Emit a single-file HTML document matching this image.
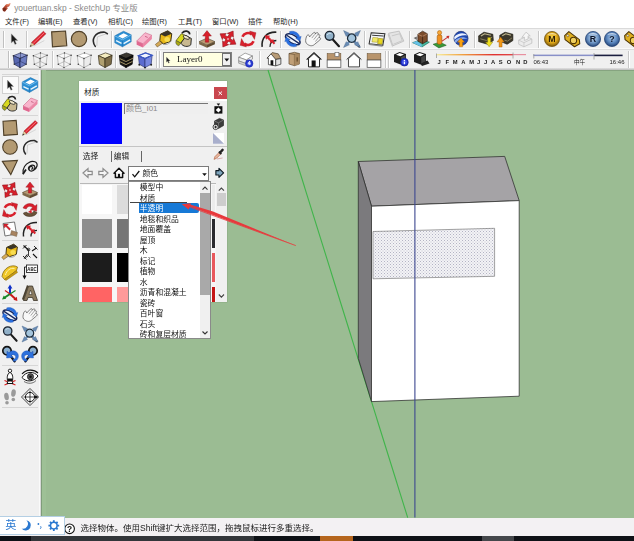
<!DOCTYPE html><html lang="zh"><head><meta charset="utf-8"><title>youertuan.skp - SketchUp</title><style>
html,body{margin:0;padding:0}
body{width:634px;height:541px;overflow:hidden;background:#f0f0f0;position:relative;
 font-family:"Liberation Sans","Noto Sans CJK SC",sans-serif;font-size:9px;color:#222}
.a{position:absolute}
.t{position:absolute;white-space:nowrap;line-height:1}
svg{position:absolute;overflow:visible}
#blurwrap{position:absolute;left:0;top:0;width:634px;height:541px;overflow:hidden;filter:blur(0.55px)}</style></head><body><div id="blurwrap">
<div class="a" style="left:0px;top:0px;width:634px;height:14px;background:#ffffff;"></div>
<div class="t" style="left:14.2px;top:3.6px;font-size:8.35px;color:#8a8a8a;">youertuan.skp - SketchUp 专业版</div>
<div class="a" style="left:0px;top:14px;width:634px;height:13.5px;background:#ffffff;"></div>
<div class="t" style="left:5px;top:17.5px;font-size:7.35px;color:#2a2a2a;">文件(F)</div>
<div class="t" style="left:38px;top:17.5px;font-size:7.35px;color:#2a2a2a;">编辑(E)</div>
<div class="t" style="left:73px;top:17.5px;font-size:7.35px;color:#2a2a2a;">查看(V)</div>
<div class="t" style="left:108px;top:17.5px;font-size:7.35px;color:#2a2a2a;">相机(C)</div>
<div class="t" style="left:142px;top:17.5px;font-size:7.35px;color:#2a2a2a;">绘图(R)</div>
<div class="t" style="left:178px;top:17.5px;font-size:7.35px;color:#2a2a2a;">工具(T)</div>
<div class="t" style="left:212px;top:17.5px;font-size:7.35px;color:#2a2a2a;">窗口(W)</div>
<div class="t" style="left:248px;top:17.5px;font-size:7.35px;color:#2a2a2a;">插件</div>
<div class="t" style="left:273px;top:17.5px;font-size:7.35px;color:#2a2a2a;">帮助(H)</div>
<div class="a" style="left:0px;top:27.5px;width:634px;height:42.5px;background:#f0f0f0;"></div>
<div class="a" style="left:0px;top:27.5px;width:634px;height:1px;background:#dadada;"></div>
<div class="a" style="left:0px;top:48px;width:634px;height:1px;background:#fafafa;"></div>
<div class="a" style="left:0px;top:49px;width:634px;height:1px;background:#dedede;"></div>
<div class="a" style="left:0px;top:68px;width:634px;height:2px;background:linear-gradient(#e2e2e2,#bcbcbc);"></div>
<div class="a" style="left:0px;top:70px;width:41px;height:447px;background:#f0f0f0;"></div>
<div class="a" style="left:41px;top:70px;width:593px;height:447.6px;background:#9bbc93;"></div>
<div class="a" style="left:41px;top:70px;width:1px;height:447.6px;background:#7f9c7a;"></div>
<div class="a" style="left:41px;top:70px;width:593px;height:1px;background:#86a480;"></div>
<div class="a" style="left:42px;top:70px;width:4px;height:447.6px;background:#9ec096;"></div>
<div class="a" style="left:0px;top:517.6px;width:634px;height:18.4px;background:#f3f1f3;"></div>
<div class="t" style="left:80.6px;top:524px;font-size:8.5px;color:#222;">选择物体。使用Shift键扩大选择范围，拖拽鼠标进行多重选择。</div>
<div class="a" style="left:0px;top:535.6px;width:634px;height:6px;background:#0e1116;"></div>
<div class="a" style="left:31px;top:535.6px;width:223px;height:6px;background:#33363a;"></div>
<div class="a" style="left:320px;top:535.6px;width:33px;height:6px;background:#b5651d;"></div>
<div class="a" style="left:482px;top:535.6px;width:32px;height:6px;background:#44474b;"></div>
<svg style="left:0;top:0" width="634" height="541" viewBox="0 0 634 541"><line x1="268" y1="70" x2="407.7" y2="517.6" stroke="#3fb44a" stroke-width="1.1"/><polygon points="358.3,161.5 504.7,156.4 519.2,200.6 371.5,206.2" fill="#a5a3a6" stroke="#2c2c2c" stroke-width="0.75" stroke-linejoin="round"/><polygon points="358.3,161.5 371.5,206.2 371.5,401.6 358.3,358.4" fill="#7b7a7d" stroke="#2c2c2c" stroke-width="0.75" stroke-linejoin="round"/><polygon points="371.5,206.2 519.2,200.6 519.2,396.2 371.5,401.6" fill="#ffffff" stroke="#2c2c2c" stroke-width="0.75" stroke-linejoin="round"/><defs><pattern id="dots" width="3" height="3" patternUnits="userSpaceOnUse"><rect width="3" height="3" fill="#f3f3f6"/><rect x="0" y="0" width="1" height="1" fill="#b4b4c4"/><rect x="1.5" y="1.5" width="1" height="1" fill="#c4c4d0"/></pattern></defs><polygon points="373,231.5 494.6,228.3 494.6,276.3 373,278.8" fill="url(#dots)" stroke="#666" stroke-width="0.6"/><line x1="414.9" y1="70" x2="414.9" y2="517.6" stroke="#3c4890" stroke-width="1.1"/></svg>
<div class="a" style="left:78.5px;top:81px;width:148.4px;height:221px;background:#f0f0f0;box-shadow:0 0 0 0.5px #8aa882;"></div>
<div class="a" style="left:78.5px;top:81px;width:148.4px;height:19.5px;background:#ffffff;"></div>
<div class="t" style="left:84px;top:88.6px;font-size:7.7px;color:#222;">材质</div>
<div class="a" style="left:214.2px;top:86.5px;width:12.6px;height:12.4px;background:#c9464e;"></div>
<svg style="left:214.2px;top:86.5px" width="12.6" height="12.4"><path d="M4.6 4.5l3.4 3.4M8 4.5l-3.4 3.4" stroke="#fff" stroke-width="1" fill="none"/></svg>
<div class="a" style="left:80.7px;top:103.3px;width:41.6px;height:41px;background:#0000ff;"></div>
<div class="a" style="left:124.4px;top:103.3px;width:84px;height:10.6px;background:#efefef;border-top:1px solid #777;border-left:1px solid #777;box-sizing:border-box;"></div>
<div class="t" style="left:126px;top:104.8px;font-size:8px;color:#8a8a8a;">颜色_I01</div>
<svg style="left:211px;top:102px" width="16" height="44" viewBox="0 0 16 44"><path d="M5.6 1.6h3.6l-1.8 2.2z" fill="#111"/><rect x="3.4" y="4.2" width="8" height="7.4" fill="#111"/><path d="M7.4 5.4l2.6 2.5-2.6 2.5-2.6-2.5z" fill="#fff"/><path d="M3.5 19l5-2.6 4 1.6v5.6l-5 2.8-4-1.8z" fill="#3c3c3c" stroke="#1a1a1a" stroke-width="0.6"/><path d="M3.5 19l4 1.8 5-2.8" fill="none" stroke="#8a8a8a" stroke-width="0.7"/><path d="M7.5 20.8v5.6" stroke="#8a8a8a" stroke-width="0.6"/><circle cx="4.6" cy="25" r="2.6" fill="#fff" stroke="#1a1a1a" stroke-width="0.8"/><path d="M3.2 25h2.8M4.6 23.6v2.8" stroke="#111" stroke-width="0.9"/><rect x="2" y="31" width="11" height="10.7" fill="#fff"/><path d="M2 31L13 41.7H2z" fill="#a9afcc"/></svg>
<div class="a" style="left:79px;top:146px;width:147.5px;height:1px;background:#c4c4c4;"></div>
<div class="t" style="left:82.8px;top:153px;font-size:7.7px;color:#222;">选择</div>
<div class="a" style="left:110.6px;top:150.5px;width:1px;height:11.5px;background:#666;"></div>
<div class="t" style="left:113.8px;top:153px;font-size:7.7px;color:#222;">编辑</div>
<div class="a" style="left:141px;top:151px;width:1px;height:11px;background:#666;"></div>
<svg style="left:211.5px;top:147.5px" width="13" height="13" viewBox="0 0 16 16"><path d="M2.5 14l1.2-3.5 5-5 2 2-5 5z" fill="#e8b8a0" stroke="#b06040" stroke-width="0.8"/><path d="M8.5 4.5l3 3" stroke="#222" stroke-width="2.2"/><path d="M10 5.5l3-3.2" stroke="#222" stroke-width="3" stroke-linecap="round"/><path d="M6 13.5l7-1.2" stroke="#c88" stroke-width="0.8"/></svg>
<svg style="left:80px;top:165px" width="48" height="16" viewBox="0 0 48 16"><path d="M3 8l5-4.5v2.8h4.2v3.4h-4.2v2.8z" fill="#f4f4f4" stroke="#8c8c8c" stroke-width="1.2"/><path d="M28 8l-5-4.5v2.8h-4.2v3.4h4.2v2.8z" fill="#f4f4f4" stroke="#8c8c8c" stroke-width="1.2"/><path d="M34 8.2l5-5 5 5h-1.4v4.2h-7.2v-4.2z" fill="#fff" stroke="#111" stroke-width="1.5" stroke-linejoin="round"/><rect x="37.9" y="8.8" width="2.2" height="3.6" fill="#111"/></svg>
<div class="a" style="left:127.8px;top:166.4px;width:81.2px;height:14.4px;background:#ffffff;border:1px solid #7a7a7a;box-sizing:border-box;"></div>
<svg style="left:131px;top:169px" width="10" height="10" viewBox="0 0 10 10"><path d="M1.5 5.2l2.2 2.6L8.3 2" fill="none" stroke="#111" stroke-width="1.3"/></svg>
<div class="t" style="left:142.4px;top:170px;font-size:7.8px;color:#222;">颜色</div>
<div class="a" style="left:199px;top:168.5px;width:9px;height:10.6px;background:#ffffff;"></div>
<svg style="left:199px;top:168.5px" width="9.6" height="10.6"><path d="M3.2 4.2h4.6l-2.3 2.8z" fill="#111"/></svg>
<svg style="left:213.6px;top:166.4px" width="12" height="14" viewBox="0 0 14 16"><path d="M2.2 5.2h3.6v-2.6l5.4 5.2-5.4 5.2v-2.6h-3.6z" fill="#7ea4bc" stroke="#0c1820" stroke-width="1.3" stroke-linejoin="round"/></svg>
<div class="a" style="left:79.5px;top:183px;width:137px;height:119px;background:#f6f6f6;border-top:1px solid #b8b8b8;box-sizing:border-box;"></div>
<div class="a" style="left:82px;top:184.7px;width:29.5px;height:29.30000000000001px;background:#ffffff;"></div>
<div class="a" style="left:116.5px;top:184.7px;width:14px;height:29.30000000000001px;background:#dcdcdc;"></div>
<div class="a" style="left:211.5px;top:184.7px;width:3.7px;height:29.30000000000001px;background:#ececec;"></div>
<div class="a" style="left:82px;top:219.3px;width:29.5px;height:28.299999999999983px;background:#8e8e8e;"></div>
<div class="a" style="left:116.5px;top:219.3px;width:14px;height:28.299999999999983px;background:#767676;"></div>
<div class="a" style="left:211.5px;top:219.3px;width:3.7px;height:28.299999999999983px;background:#2a2a2e;"></div>
<div class="a" style="left:82px;top:253px;width:29.5px;height:29.19999999999999px;background:#1c1c1c;"></div>
<div class="a" style="left:116.5px;top:253px;width:14px;height:29.19999999999999px;background:#000000;"></div>
<div class="a" style="left:211.5px;top:253px;width:3.7px;height:29.19999999999999px;background:#e8585c;"></div>
<div class="a" style="left:82px;top:286.8px;width:29.5px;height:15.199999999999989px;background:#ff6464;"></div>
<div class="a" style="left:116.5px;top:286.8px;width:14px;height:15.199999999999989px;background:#ff9a9a;"></div>
<div class="a" style="left:211.5px;top:286.8px;width:3.7px;height:15.199999999999989px;background:#c41414;"></div>
<div class="a" style="left:216.4px;top:183px;width:10.4px;height:119px;background:#f0f0f0;"></div>
<div class="a" style="left:217.2px;top:193px;width:9px;height:12.5px;background:#cdcdcd;"></div>
<svg style="left:216.4px;top:183px" width="10.6" height="119"><path d="M2.8 7.6l2.6-2.6 2.6 2.6" fill="none" stroke="#444" stroke-width="1.1"/><path d="M2.8 111.5l2.6 2.6 2.6-2.6" fill="none" stroke="#444" stroke-width="1.1"/></svg>
<div class="a" style="left:128px;top:181px;width:83px;height:158.4px;background:#ffffff;border:1px solid #8a8a8a;box-sizing:border-box;"></div>
<div class="a" style="left:130px;top:202px;width:57px;height:1px;background:#444;"></div>
<div class="a" style="left:139px;top:203.3px;width:59.5px;height:10.2px;background:#1779d6;border-radius:0 2px 2px 0;"></div>
<div class="t" style="left:139.8px;top:184.3px;font-size:7.8px;color:#111;">模型中</div>
<div class="t" style="left:139.8px;top:194.8px;font-size:7.8px;color:#111;">材质</div>
<div class="t" style="left:139.8px;top:205.3px;font-size:7.8px;color:#fff;">半透明</div>
<div class="t" style="left:139.8px;top:215.8px;font-size:7.8px;color:#111;">地毯和织品</div>
<div class="t" style="left:139.8px;top:226.3px;font-size:7.8px;color:#111;">地面覆盖</div>
<div class="t" style="left:139.8px;top:236.8px;font-size:7.8px;color:#111;">屋顶</div>
<div class="t" style="left:139.8px;top:247.3px;font-size:7.8px;color:#111;">木</div>
<div class="t" style="left:139.8px;top:257.8px;font-size:7.8px;color:#111;">标记</div>
<div class="t" style="left:139.8px;top:268.3px;font-size:7.8px;color:#111;">植物</div>
<div class="t" style="left:139.8px;top:278.8px;font-size:7.8px;color:#111;">水</div>
<div class="t" style="left:139.8px;top:289.3px;font-size:7.8px;color:#111;">沥青和混凝土</div>
<div class="t" style="left:139.8px;top:299.8px;font-size:7.8px;color:#111;">瓷砖</div>
<div class="t" style="left:139.8px;top:310.3px;font-size:7.8px;color:#111;">百叶窗</div>
<div class="t" style="left:139.8px;top:320.8px;font-size:7.8px;color:#111;">石头</div>
<div class="t" style="left:139.8px;top:331.3px;font-size:7.8px;color:#111;">砖和复层材质</div>
<div class="a" style="left:200px;top:181.5px;width:10px;height:156.5px;background:#f0f0f0;"></div>
<div class="a" style="left:200.4px;top:192.6px;width:9.2px;height:102px;background:#a9a9a9;"></div>
<svg style="left:200px;top:181.5px" width="10" height="157"><path d="M2.5 7.6l2.5-2.5 2.5 2.5" fill="none" stroke="#333" stroke-width="1.1"/><path d="M2.5 149.5l2.5 2.5 2.5-2.5" fill="none" stroke="#333" stroke-width="1.1"/></svg>
<svg style="left:0;top:0" width="634" height="541" viewBox="0 0 634 541"><path d="M295.8 245.6L190 206.5L188.6 209.6L182 204.3L190.5 203.2L190.8 204.8L213 211.5Z" fill="#e8383c"/><path d="M295.8 245.6L182.5 204.4" stroke="#e8383c" stroke-width="0.8"/></svg>
<div class="a" style="left:39px;top:70px;width:1px;height:447px;background:#fafafa;"></div>
<div class="a" style="left:40px;top:70px;width:1px;height:447px;background:#d8d8d8;"></div>
<div class="a" style="left:1.5px;top:76px;width:17px;height:18px;background:#fbfbfb;border:1px solid #d0d0d0;box-sizing:border-box;"></div>
<svg style="left:9.6px;top:85.3px" width="1" height="1"><g transform="scale(1.0)"><path d="M-2.6 -5V3.8L-0.6 2L0.9 5.2L2.3 4.6L0.9 1.5H3.6Z" fill="#1a1a1a" stroke="#aaa" stroke-width="0.4"/></g></svg>
<svg style="left:30.2px;top:85.3px" width="1" height="1"><g transform="scale(1.0)"><path d="M-7.8 -3L0.5 -7.4L7.8 -4V2.6L-0.5 7.4L-7.8 3.6Z" fill="#2b8fd4" stroke="#1668a8" stroke-width="0.5"/><path d="M-4.6 -2.6L0.6 -5.4L4.8 -3.4L-0.4 -0.4Z" fill="#fff"/><path d="M-0.5 0.8V7.4" stroke="#1668a8" stroke-width="0.5"/><path d="M-6.6 1.6L-1.4 4.2M0.6 4.4L6.8 0.8" fill="none" stroke="#eaf5fc" stroke-width="1.4"/><path d="M-7.8 -3L-0.5 0.8L7.8 -4" fill="none" stroke="#8cccf4" stroke-width="0.7"/></g></svg>
<svg style="left:9.6px;top:104.2px" width="1" height="1"><g transform="scale(1.0)"><path d="M-2 -5.5C0.5 -8.5 5 -8 5.5 -4.5" fill="none" stroke="#222" stroke-width="1.6"/><path d="M-7.5 1.5L-2.5 -5L2 -3L-3 4Z" fill="#d8d820" stroke="#55550a" stroke-width="0.7"/><path d="M-3 4L2 -3L7 -0.5L6.5 5.5C4 8 -1 7.5 -3 4Z" fill="#c8b890" stroke="#222" stroke-width="0.9"/><path d="M-7.5 1.5C-8.5 4 -7 6 -5 6.5L-3 4Z" fill="#a8a810" stroke="#444" stroke-width="0.5"/><ellipse cx="2.2" cy="-1.6" rx="3.2" ry="1.5" transform="rotate(25 2.2 -1.6)" fill="#efe6c8" stroke="#222" stroke-width="0.7"/></g></svg>
<svg style="left:30.2px;top:104.2px" width="1" height="1"><g transform="scale(1.0)"><path d="M-7 2L1 -6L7.5 -3.5L-1 4.5Z" fill="#f9b4cc" stroke="#c05878" stroke-width="0.5"/><path d="M-7 2L-1 4.5V8L-7 5.5Z" fill="#e06890"/><path d="M-1 4.5L7.5 -3.5V0L-1 8Z" fill="#ec86a6"/><path d="M1 -2.5L3.5 -1.5" stroke="#c05878" stroke-width="0.8"/></g></svg>
<svg style="left:9.6px;top:127.9px" width="1" height="1"><g transform="scale(1.0)"><path d="M-7 -6.8L6.2 -7.6L7.4 6.4L-6.2 7.4Z" fill="#b39a72" stroke="#4e3f28" stroke-width="1.1"/></g></svg>
<svg style="left:30.2px;top:127.9px" width="1" height="1"><g transform="scale(1.0)"><path d="M-7.6 7.4L-6 3L-3.4 5.6Z" fill="#e8c89a" stroke="#553" stroke-width="0.3"/><path d="M-7.6 7.4L-7 5.6L-5.9 6.7Z" fill="#222"/><path d="M-6 3L5.2 -7.4L7.6 -5L-3.4 5.6Z" fill="#dc2430" stroke="#901018" stroke-width="0.4"/><path d="M-4.6 4.2L6.2 -6.2" stroke="#ff9098" stroke-width="0.7"/><path d="M-4 6.8L6 1.5" stroke="#bbb" stroke-width="0.8" opacity="0.6"/></g></svg>
<svg style="left:9.6px;top:147px" width="1" height="1"><g transform="scale(1.0)"><circle cx="0" cy="0" r="7.3" fill="#b39a72" stroke="#4e3f28" stroke-width="1.1"/></g></svg>
<svg style="left:30.2px;top:147px" width="1" height="1"><g transform="scale(1.0)"><path d="M-4.5 7C-9 1 -5 -7 4.5 -6.5L7 -5" fill="none" stroke="#2a2a2a" stroke-width="1.5" stroke-linecap="round"/><path d="M-3 6.5L-2.5 -2L6 -5" fill="none" stroke="#999" stroke-width="0.4"/></g></svg>
<svg style="left:9.6px;top:167px" width="1" height="1"><g transform="scale(1.0)"><path d="M-7.6 -5.6L7.4 -6.6L0.8 7.6Z" fill="#b39a72" stroke="#4e3f28" stroke-width="1.1"/></g></svg>
<svg style="left:30.2px;top:167px" width="1" height="1"><g transform="scale(1.0)"><path d="M-6.8 6.8C-8 1 -4 -3 -1 -4.5C3 -7 8 -5 7 -1C6 3 1 5.5 -1 3C-3 0 2 -3.5 4.5 -1C6 1.5 3 4.5 0.5 4C-2 3 -1 -0.5 1.5 -0.5C3.5 0 3 2.5 1.5 2" fill="none" stroke="#1c1c1c" stroke-width="1.2" stroke-linecap="round"/><path d="M-7 7L-4 2.5" stroke="#1c1c1c" stroke-width="1.8"/></g></svg>
<svg style="left:9.6px;top:190.2px" width="1" height="1"><g transform="scale(1.0)"><g transform="rotate(-12)"><path transform="rotate(45)" d="M0 -9L3.4 -4.2L1.4 -4.6V-0.8H-1.4V-4.6L-3.4 -4.2Z" fill="#d8202c" stroke="#8c1018" stroke-width="0.5" stroke-linejoin="round"/><path transform="rotate(135)" d="M0 -9L3.4 -4.2L1.4 -4.6V-0.8H-1.4V-4.6L-3.4 -4.2Z" fill="#d8202c" stroke="#8c1018" stroke-width="0.5" stroke-linejoin="round"/><path transform="rotate(225)" d="M0 -9L3.4 -4.2L1.4 -4.6V-0.8H-1.4V-4.6L-3.4 -4.2Z" fill="#d8202c" stroke="#8c1018" stroke-width="0.5" stroke-linejoin="round"/><path transform="rotate(315)" d="M0 -9L3.4 -4.2L1.4 -4.6V-0.8H-1.4V-4.6L-3.4 -4.2Z" fill="#d8202c" stroke="#8c1018" stroke-width="0.5" stroke-linejoin="round"/><rect x="-1.9" y="-1.9" width="3.8" height="3.8" fill="#d8202c" transform="rotate(45)"/><rect x="-0.7" y="-0.7" width="1.4" height="1.4" fill="#f8d8d8" transform="rotate(45)"/></g></g></svg>
<svg style="left:30.2px;top:190.2px" width="1" height="1"><g transform="scale(1.0)"><path d="M-7.5 2.5L0 -0.8L7.5 2.5L0 5.8Z" fill="#b89c74" stroke="#4e3f28" stroke-width="0.6"/><path d="M-7.5 2.5V5L0 8.3V5.8Z" fill="#7d6848"/><path d="M7.5 2.5V5L0 8.3V5.8Z" fill="#5e4c32"/><path d="M-1.6 3V-2.8H-4.2L0 -8L4.2 -2.8H1.6V3Z" fill="#d8202c" stroke="#8c1018" stroke-width="0.4"/></g></svg>
<svg style="left:9.6px;top:210px" width="1" height="1"><g transform="scale(1.0)"><path d="M-5.3 -2.2A5.7 5.7 0 0 1 3.6 -4.4" fill="none" stroke="#d8202c" stroke-width="2.5"/><path d="M1.4 -7.6L7.6 -6L6.2 0.4Z" fill="#d8202c" stroke="#8c1018" stroke-width="0.3"/><g transform="rotate(180)"><path d="M-5.3 -2.2A5.7 5.7 0 0 1 3.6 -4.4" fill="none" stroke="#d8202c" stroke-width="2.5"/><path d="M1.4 -7.6L7.6 -6L6.2 0.4Z" fill="#d8202c" stroke="#8c1018" stroke-width="0.3"/></g></g></svg>
<svg style="left:30.2px;top:210px" width="1" height="1"><g transform="scale(1.0)"><path d="M-6.5 3C-6.5 7.5 5.5 8 7 2.5L4 1C3 4 -3 4 -3.5 2Z" fill="#6a5238" stroke="#2e2416" stroke-width="0.5"/><path d="M-7 -2C-5 -7 2 -8 5 -4L7 -5.5L6.6 1.2L0.4 -0.6L2.6 -2.2C0.5 -4.5 -2.5 -4 -3.8 -1Z" fill="#d8202c" stroke="#8c1018" stroke-width="0.4"/><path d="M-2 2L1.5 -0.5L1.8 3.5Z" fill="#d8202c"/></g></svg>
<svg style="left:9.6px;top:228.7px" width="1" height="1"><g transform="scale(1.0)"><path d="M-7 -5.5L4.5 -7L6.5 5L-5 7Z" fill="#fff" stroke="#666" stroke-width="0.9"/><path d="M-6.4 -5L-1.6 -5L-3 -3.6L0.6 0L-0.6 1.2L-4.2 -2.4L-5.6 -1Z" fill="#d8202c" stroke="#8c1018" stroke-width="0.3"/><path d="M1.5 1.5L7.5 3.5L6.5 7.5L0.5 5.5Z" fill="#a88460" stroke="#5e4c32" stroke-width="0.4"/></g></svg>
<svg style="left:30.2px;top:228.7px" width="1" height="1"><g transform="scale(1.0)"><path d="M-6.5 7.5C-7.5 -1 -2 -7 7 -6.5" fill="none" stroke="#222" stroke-width="1.5"/><path d="M1 7.5C0.6 4 3 1.6 7 1.4" fill="none" stroke="#222" stroke-width="1.3"/><path d="M-4 -3.5L1.2 -3.2L0 -2L2 0L0.4 1.6L-1.6 -0.4L-2.8 0.8Z" fill="#d8202c"/><path d="M0.5 0.2L5.2 0.6L4 1.8L6 3.8L4.6 5.2L2.6 3.2L1.4 4.4Z" fill="#d8202c"/></g></svg>
<svg style="left:9.6px;top:252px" width="1" height="1"><g transform="scale(1.0)"><path d="M-8.2 5.2L-3 1L-0.8 3.6L-6.4 7.6Z" fill="#d4aa58" stroke="#5a4018" stroke-width="0.5"/><path d="M-3.4 -4.6L3.6 -7.8L7.4 -5L6.4 2.2L-0.6 4.8L-4 1.4Z" fill="#e8b818" stroke="#33280a" stroke-width="0.9"/><path d="M-3.4 -4.6L3.6 -7.8L7.4 -5L1 -2.4Z" fill="#3a3428"/><ellipse cx="3" cy="0.4" rx="2.6" ry="2.4" fill="#f8dc50"/><path d="M-0.6 4.8C1 6 5 5 6.4 2.2" fill="none" stroke="#999" stroke-width="0.8"/></g></svg>
<svg style="left:30.2px;top:252px" width="1" height="1"><g transform="scale(1.0)"><path d="M-6.5 -6.5L-1 -1.5M6.5 -4L2 -1M-6 6.5L-2.5 2.5M7 6L3 2" stroke="#111" stroke-width="1.1"/><path d="M-7 -3.5L-3.5 -7M-7 4L-3.5 7.5M4 -6L7.5 -2.5" stroke="#111" stroke-width="0.9"/><circle cx="-1.5" cy="-2.5" r="1.3" fill="none" stroke="#111" stroke-width="0.8"/><path d="M-1.5 -1.2V3.5M-3.5 5.5L-1.5 3.5L0.5 5.5" stroke="#111" stroke-width="0.8" fill="none"/></g></svg>
<svg style="left:9.6px;top:272px" width="1" height="1"><g transform="scale(1.0)"><path d="M-8 4.5C-7 -4 2 -8.5 7.5 -5L6.5 -1.5L-5.5 7.5Z" fill="#f0c828" stroke="#7a5c08" stroke-width="0.7"/><path d="M-5.5 7.5L6.5 -1.5L7.5 0.5L-4 8.5Z" fill="#c89c10" stroke="#7a5c08" stroke-width="0.4"/><path d="M-4.5 3C-3.5 -1.5 0.5 -4.5 4.5 -3.5" fill="none" stroke="#fff2a8" stroke-width="1"/></g></svg>
<svg style="left:30.2px;top:272px" width="1" height="1"><g transform="scale(1.0)"><rect x="-3.5" y="-7" width="11" height="7.5" fill="#fff" stroke="#111" stroke-width="0.8"/><text x="2" y="-1" font-size="6" font-weight="bold" text-anchor="middle" fill="#111" font-family="Liberation Sans,sans-serif" textLength="9.4" lengthAdjust="spacingAndGlyphs">ABC</text><path d="M-5.5 -5V6" stroke="#111" stroke-width="0.9"/><path d="M-7.5 3.5L-5.5 7.5L-3.5 3.5Z" fill="#111"/><path d="M-5.5 -5H-3.5" stroke="#111" stroke-width="0.9"/></g></svg>
<svg style="left:9.6px;top:293px" width="1" height="1"><g transform="scale(1.0)"><path d="M0 1V-7" stroke="#1030c8" stroke-width="2"/><path d="M-2.4 -4.6L0 -8.6L2.4 -4.6Z" fill="#1030c8"/><path d="M0 1L-6 5" stroke="#188828" stroke-width="2"/><path d="M-8 6.4L-6.2 2.6L-3.8 5.8Z" fill="#188828"/><path d="M0 1L5.5 6" stroke="#c81818" stroke-width="2"/><path d="M7.4 8L6.8 3.8L3.4 6.8Z" fill="#c81818"/><path d="M0 1L-5 -2.5" stroke="#c81818" stroke-width="1.2"/><path d="M0 1L5.5 -2.5" stroke="#188828" stroke-width="1.2"/></g></svg>
<svg style="left:30.2px;top:293px" width="1" height="1"><g transform="scale(1.0)"><path d="M-6.5 7.5L-1.5 -7H2.5L7.5 7.5H3.5L2.5 4.5H-2L-3 7.5Z" fill="#8a7a60" stroke="#2a2418" stroke-width="0.7"/><path d="M-1 1.5L0.5 -3L2 1.5Z" fill="#f0f0f0" stroke="#2a2418" stroke-width="0.5"/><path d="M-6.5 7.5L-8 6L-3 -8L-1.5 -7Z" fill="#4a4030"/></g></svg>
<svg style="left:9.6px;top:315.3px" width="1" height="1"><g transform="scale(1.0)"><ellipse cx="0" cy="0.3" rx="7.8" ry="3.8" transform="rotate(32)" fill="#eef4fc" stroke="#18285c" stroke-width="1.5"/><path d="M-3.5 -7C1 -8.5 5.5 -6 6.5 -2L7.8 -2.6L6.6 1.8L2.6 -0.6L4.2 -1.2C3.4 -3.8 0.4 -5.4 -2.6 -4.6Z" fill="#2a70e0" stroke="#1848a8" stroke-width="0.3"/><path d="M3.5 7C-1 8.5 -5.5 6 -6.5 2L-7.8 2.6L-6.6 -1.8L-2.6 0.6L-4.2 1.2C-3.4 3.8 -0.4 5.4 2.6 4.6Z" fill="#2a70e0" stroke="#1848a8" stroke-width="0.3"/><path d="M-6 -3.6L6 4.4" stroke="#18285c" stroke-width="1.3" fill="none"/></g></svg>
<svg style="left:30.2px;top:315.3px" width="1" height="1"><g transform="scale(1.0)"><path d="M-6.5 2.5C-7.5 0 -6 -1.5 -4 0.5L-3.5 -5C-3 -7 -1.3 -6.5 -1.5 -5L-1 -7C-0.5 -8.5 1.3 -8 1 -6.5L1.5 -6.5C2 -8 3.8 -7.5 3.5 -5.5L4 -5C5 -6 6.5 -5 6 -3.5L4.5 3.5C4 6.5 1 8 -2.5 7.5C-4.5 7 -5.5 5 -6.5 2.5Z" fill="#f8f8f8" stroke="#4a4a4a" stroke-width="0.65" transform="rotate(38) scale(0.95)"/><path d="M-1.5 -4.5V0M1 -6V0M3.5 -5V0.5" stroke="#666" stroke-width="0.55" transform="rotate(38) scale(0.95)"/></g></svg>
<svg style="left:9.6px;top:334.2px" width="1" height="1"><g transform="scale(1.0)"><path d="M0.8 0.4L6.6 6.8" stroke="#1c1c1c" stroke-width="2.1" stroke-linecap="round"/><circle cx="-2.3" cy="-3" r="4.2" fill="#90b0c8" stroke="#1c2430" stroke-width="1.3"/><path d="M-4.6 -3.8C-3.8 -5.4 -2 -5.8 -0.6 -5" fill="none" stroke="#d0e4f0" stroke-width="0.9"/></g></svg>
<svg style="left:30.2px;top:334.2px" width="1" height="1"><g transform="scale(1.0)"><path d="M1.5 2L6.8 7.2" stroke="#1c1c1c" stroke-width="2" stroke-linecap="round"/><path d="M-8 -8L-2.5 -5.5L-5.5 -2.5ZM8 -8L2.5 -5.5L5.5 -2.5ZM-8 8L-2.5 5.5L-5.5 2.5ZM8 8L5.5 2.5L2.5 5.5Z" fill="#6a8cb4" stroke="#46648c" stroke-width="0.4"/><path d="M-5 -5L5 5M5 -5L-5 5" stroke="#6a8cb4" stroke-width="2.2"/><circle cx="-0.3" cy="-0.8" r="4" fill="#a4c4dc" stroke="#1c2c3c" stroke-width="1.2"/></g></svg>
<svg style="left:9.6px;top:354.2px" width="1" height="1"><g transform="scale(1.0)"><path d="M-0.5 0.5L4.6 7.4" stroke="#141414" stroke-width="2.3" stroke-linecap="round"/><circle cx="-3" cy="-3.2" r="4.2" fill="#8cb0d0" stroke="#141414" stroke-width="1.7"/><path d="M8.2 0.6C7 -3.6 1.6 -4.4 -1 -1.2L-3 -2.8L-3.4 4L3.2 3.4L1.2 1.6C2.6 0 5.2 0.4 5.6 2.6C6 4.4 4.4 5.4 3 5.2L3.4 7.4C6.8 7.4 9 4.4 8.2 0.6Z" fill="#2c70dc" stroke="#1848a8" stroke-width="0.4"/></g></svg>
<svg style="left:30.2px;top:354.2px" width="1" height="1"><g transform="scale(1.0)"><g transform="scale(-1,1)"><path d="M-0.5 0.5L4.6 7.4" stroke="#141414" stroke-width="2.3" stroke-linecap="round"/><circle cx="-3" cy="-3.2" r="4.2" fill="#8cb0d0" stroke="#141414" stroke-width="1.7"/><path d="M8.2 0.6C7 -3.6 1.6 -4.4 -1 -1.2L-3 -2.8L-3.4 4L3.2 3.4L1.2 1.6C2.6 0 5.2 0.4 5.6 2.6C6 4.4 4.4 5.4 3 5.2L3.4 7.4C6.8 7.4 9 4.4 8.2 0.6Z" fill="#2c70dc" stroke="#1848a8" stroke-width="0.4"/></g></g></svg>
<svg style="left:9.6px;top:377.2px" width="1" height="1"><g transform="scale(1.0)"><path d="M-5.5 3.5L5.5 8M5.5 3.5L-5.5 8" stroke="#d82020" stroke-width="1.2"/><circle cx="0" cy="-6.2" r="1.7" fill="#fff" stroke="#111" stroke-width="0.9"/><path d="M-0.2 -4.5C-3 -3 -3.2 1 -2.2 4.5L-3 6.5H3L2.2 4.5C3.2 1 3 -3 0.2 -4.5Z" fill="#fff" stroke="#111" stroke-width="1"/><path d="M-2.2 1.5H2.2V4.5H-2.2Z" fill="#111"/></g></svg>
<svg style="left:30.2px;top:377.2px" width="1" height="1"><g transform="scale(1.0)"><path d="M-8 0.5C-4 -6 4 -6 8 -1C4 5 -4 5.5 -8 0.5Z" fill="#fff" stroke="#111" stroke-width="1"/><circle cx="0.5" cy="-0.3" r="3.1" fill="#555" stroke="#111" stroke-width="0.7"/><circle cx="0.5" cy="-0.3" r="1.3" fill="#111"/><path d="M-8 -3C-4 -8 4 -8 8 -4" fill="none" stroke="#111" stroke-width="1.1"/><path d="M-6 4.5C-2 7 3 7 6 3.5" fill="none" stroke="#333" stroke-width="0.7"/></g></svg>
<svg style="left:9.6px;top:397px" width="1" height="1"><g transform="scale(1.0)"><ellipse cx="-3.5" cy="-0.5" rx="2.3" ry="3.8" transform="rotate(-8 -3.5 -0.5)" fill="#9a9a9a"/><ellipse cx="-3" cy="5.8" rx="1.8" ry="1.7" fill="#9a9a9a"/><ellipse cx="3.5" cy="-4" rx="2.3" ry="3.8" transform="rotate(8 3.5 -4)" fill="#9a9a9a"/><ellipse cx="3.3" cy="2.5" rx="1.8" ry="1.7" fill="#9a9a9a"/></g></svg>
<svg style="left:30.2px;top:397px" width="1" height="1"><g transform="scale(1.0)"><path d="M0 -8.5L8.5 0L0 8.5L-8.5 0Z" fill="#fff" stroke="#111" stroke-width="0.8"/><circle cx="0" cy="0" r="4.6" fill="none" stroke="#111" stroke-width="1"/><path d="M0 -6.5V6.5M-6.5 0H6.5" stroke="#111" stroke-width="0.8"/><path d="M5 -1.8L8.5 0L5 1.8Z" fill="#111"/></g></svg>
<div class="a" style="left:2px;top:74.2px;width:36px;height:1px;background:#d6d6d6;"></div>
<div class="a" style="left:2px;top:115.3px;width:36px;height:1px;background:#d6d6d6;"></div>
<div class="a" style="left:2px;top:177.5px;width:36px;height:1px;background:#d6d6d6;"></div>
<div class="a" style="left:2px;top:239.6px;width:36px;height:1px;background:#d6d6d6;"></div>
<div class="a" style="left:2px;top:302.8px;width:36px;height:1px;background:#d6d6d6;"></div>
<div class="a" style="left:2px;top:364.5px;width:36px;height:1px;background:#d6d6d6;"></div>
<div class="a" style="left:2px;top:407px;width:36px;height:1px;background:#d6d6d6;"></div>
<div class="a" style="left:3px;top:30.5px;width:1px;height:17px;background:#c0c0c0;"></div>
<div class="a" style="left:4px;top:30.5px;width:1px;height:17px;background:#ffffff;"></div>
<div class="a" style="left:26px;top:30.5px;width:1px;height:17px;background:#c8c8c8;"></div>
<div class="a" style="left:27px;top:30.5px;width:1px;height:17px;background:#ffffff;"></div>
<div class="a" style="left:111px;top:30.5px;width:1px;height:17px;background:#c8c8c8;"></div>
<div class="a" style="left:112px;top:30.5px;width:1px;height:17px;background:#ffffff;"></div>
<div class="a" style="left:196px;top:30.5px;width:1px;height:17px;background:#c8c8c8;"></div>
<div class="a" style="left:197px;top:30.5px;width:1px;height:17px;background:#ffffff;"></div>
<div class="a" style="left:280px;top:30.5px;width:1px;height:17px;background:#c8c8c8;"></div>
<div class="a" style="left:281px;top:30.5px;width:1px;height:17px;background:#ffffff;"></div>
<div class="a" style="left:364px;top:30.5px;width:1px;height:17px;background:#c8c8c8;"></div>
<div class="a" style="left:365px;top:30.5px;width:1px;height:17px;background:#ffffff;"></div>
<div class="a" style="left:408.5px;top:30.5px;width:1px;height:17px;background:#c8c8c8;"></div>
<div class="a" style="left:409.5px;top:30.5px;width:1px;height:17px;background:#ffffff;"></div>
<div class="a" style="left:473.5px;top:30.5px;width:1px;height:17px;background:#c8c8c8;"></div>
<div class="a" style="left:474.5px;top:30.5px;width:1px;height:17px;background:#ffffff;"></div>
<div class="a" style="left:537.5px;top:30.5px;width:1px;height:17px;background:#c8c8c8;"></div>
<div class="a" style="left:538.5px;top:30.5px;width:1px;height:17px;background:#ffffff;"></div>
<svg style="left:14.2px;top:39px" width="1" height="1"><g transform="scale(1.05)"><path d="M-2.6 -5V3.8L-0.6 2L0.9 5.2L2.3 4.6L0.9 1.5H3.6Z" fill="#1a1a1a" stroke="#aaa" stroke-width="0.4"/></g></svg>
<svg style="left:37.8px;top:39px" width="1" height="1"><g transform="scale(1.05)"><path d="M-7.6 7.4L-6 3L-3.4 5.6Z" fill="#e8c89a" stroke="#553" stroke-width="0.3"/><path d="M-7.6 7.4L-7 5.6L-5.9 6.7Z" fill="#222"/><path d="M-6 3L5.2 -7.4L7.6 -5L-3.4 5.6Z" fill="#dc2430" stroke="#901018" stroke-width="0.4"/><path d="M-4.6 4.2L6.2 -6.2" stroke="#ff9098" stroke-width="0.7"/><path d="M-4 6.8L6 1.5" stroke="#bbb" stroke-width="0.8" opacity="0.6"/></g></svg>
<svg style="left:58.7px;top:39px" width="1" height="1"><g transform="scale(1.05)"><path d="M-7 -6.8L6.2 -7.6L7.4 6.4L-6.2 7.4Z" fill="#b39a72" stroke="#4e3f28" stroke-width="1.1"/></g></svg>
<svg style="left:78.7px;top:39px" width="1" height="1"><g transform="scale(1.05)"><circle cx="0" cy="0" r="7.3" fill="#b39a72" stroke="#4e3f28" stroke-width="1.1"/></g></svg>
<svg style="left:99.6px;top:39px" width="1" height="1"><g transform="scale(1.05)"><path d="M-4.5 7C-9 1 -5 -7 4.5 -6.5L7 -5" fill="none" stroke="#2a2a2a" stroke-width="1.5" stroke-linecap="round"/><path d="M-3 6.5L-2.5 -2L6 -5" fill="none" stroke="#999" stroke-width="0.4"/></g></svg>
<svg style="left:123.4px;top:39px" width="1" height="1"><g transform="scale(1.05)"><path d="M-7.8 -3L0.5 -7.4L7.8 -4V2.6L-0.5 7.4L-7.8 3.6Z" fill="#2b8fd4" stroke="#1668a8" stroke-width="0.5"/><path d="M-4.6 -2.6L0.6 -5.4L4.8 -3.4L-0.4 -0.4Z" fill="#fff"/><path d="M-0.5 0.8V7.4" stroke="#1668a8" stroke-width="0.5"/><path d="M-6.6 1.6L-1.4 4.2M0.6 4.4L6.8 0.8" fill="none" stroke="#eaf5fc" stroke-width="1.4"/><path d="M-7.8 -3L-0.5 0.8L7.8 -4" fill="none" stroke="#8cccf4" stroke-width="0.7"/></g></svg>
<svg style="left:143.6px;top:39px" width="1" height="1"><g transform="scale(1.05)"><path d="M-7 2L1 -6L7.5 -3.5L-1 4.5Z" fill="#f9b4cc" stroke="#c05878" stroke-width="0.5"/><path d="M-7 2L-1 4.5V8L-7 5.5Z" fill="#e06890"/><path d="M-1 4.5L7.5 -3.5V0L-1 8Z" fill="#ec86a6"/><path d="M1 -2.5L3.5 -1.5" stroke="#c05878" stroke-width="0.8"/></g></svg>
<svg style="left:163.6px;top:39px" width="1" height="1"><g transform="scale(1.05)"><path d="M-8.2 5.2L-3 1L-0.8 3.6L-6.4 7.6Z" fill="#d4aa58" stroke="#5a4018" stroke-width="0.5"/><path d="M-3.4 -4.6L3.6 -7.8L7.4 -5L6.4 2.2L-0.6 4.8L-4 1.4Z" fill="#e8b818" stroke="#33280a" stroke-width="0.9"/><path d="M-3.4 -4.6L3.6 -7.8L7.4 -5L1 -2.4Z" fill="#3a3428"/><ellipse cx="3" cy="0.4" rx="2.6" ry="2.4" fill="#f8dc50"/><path d="M-0.6 4.8C1 6 5 5 6.4 2.2" fill="none" stroke="#999" stroke-width="0.8"/></g></svg>
<svg style="left:184.2px;top:39px" width="1" height="1"><g transform="scale(1.05)"><path d="M-2 -5.5C0.5 -8.5 5 -8 5.5 -4.5" fill="none" stroke="#222" stroke-width="1.6"/><path d="M-7.5 1.5L-2.5 -5L2 -3L-3 4Z" fill="#d8d820" stroke="#55550a" stroke-width="0.7"/><path d="M-3 4L2 -3L7 -0.5L6.5 5.5C4 8 -1 7.5 -3 4Z" fill="#c8b890" stroke="#222" stroke-width="0.9"/><path d="M-7.5 1.5C-8.5 4 -7 6 -5 6.5L-3 4Z" fill="#a8a810" stroke="#444" stroke-width="0.5"/><ellipse cx="2.2" cy="-1.6" rx="3.2" ry="1.5" transform="rotate(25 2.2 -1.6)" fill="#efe6c8" stroke="#222" stroke-width="0.7"/></g></svg>
<svg style="left:206.6px;top:39px" width="1" height="1"><g transform="scale(1.05)"><path d="M-7.5 2.5L0 -0.8L7.5 2.5L0 5.8Z" fill="#b89c74" stroke="#4e3f28" stroke-width="0.6"/><path d="M-7.5 2.5V5L0 8.3V5.8Z" fill="#7d6848"/><path d="M7.5 2.5V5L0 8.3V5.8Z" fill="#5e4c32"/><path d="M-1.6 3V-2.8H-4.2L0 -8L4.2 -2.8H1.6V3Z" fill="#d8202c" stroke="#8c1018" stroke-width="0.4"/></g></svg>
<svg style="left:227.8px;top:39px" width="1" height="1"><g transform="scale(1.05)"><g transform="rotate(-12)"><path transform="rotate(45)" d="M0 -9L3.4 -4.2L1.4 -4.6V-0.8H-1.4V-4.6L-3.4 -4.2Z" fill="#d8202c" stroke="#8c1018" stroke-width="0.5" stroke-linejoin="round"/><path transform="rotate(135)" d="M0 -9L3.4 -4.2L1.4 -4.6V-0.8H-1.4V-4.6L-3.4 -4.2Z" fill="#d8202c" stroke="#8c1018" stroke-width="0.5" stroke-linejoin="round"/><path transform="rotate(225)" d="M0 -9L3.4 -4.2L1.4 -4.6V-0.8H-1.4V-4.6L-3.4 -4.2Z" fill="#d8202c" stroke="#8c1018" stroke-width="0.5" stroke-linejoin="round"/><path transform="rotate(315)" d="M0 -9L3.4 -4.2L1.4 -4.6V-0.8H-1.4V-4.6L-3.4 -4.2Z" fill="#d8202c" stroke="#8c1018" stroke-width="0.5" stroke-linejoin="round"/><rect x="-1.9" y="-1.9" width="3.8" height="3.8" fill="#d8202c" transform="rotate(45)"/><rect x="-0.7" y="-0.7" width="1.4" height="1.4" fill="#f8d8d8" transform="rotate(45)"/></g></g></svg>
<svg style="left:247.7px;top:39px" width="1" height="1"><g transform="scale(1.05)"><path d="M-5.3 -2.2A5.7 5.7 0 0 1 3.6 -4.4" fill="none" stroke="#d8202c" stroke-width="2.5"/><path d="M1.4 -7.6L7.6 -6L6.2 0.4Z" fill="#d8202c" stroke="#8c1018" stroke-width="0.3"/><g transform="rotate(180)"><path d="M-5.3 -2.2A5.7 5.7 0 0 1 3.6 -4.4" fill="none" stroke="#d8202c" stroke-width="2.5"/><path d="M1.4 -7.6L7.6 -6L6.2 0.4Z" fill="#d8202c" stroke="#8c1018" stroke-width="0.3"/></g></g></svg>
<svg style="left:268.6px;top:39px" width="1" height="1"><g transform="scale(1.05)"><path d="M-6.5 7.5C-7.5 -1 -2 -7 7 -6.5" fill="none" stroke="#222" stroke-width="1.5"/><path d="M1 7.5C0.6 4 3 1.6 7 1.4" fill="none" stroke="#222" stroke-width="1.3"/><path d="M-4 -3.5L1.2 -3.2L0 -2L2 0L0.4 1.6L-1.6 -0.4L-2.8 0.8Z" fill="#d8202c"/><path d="M0.5 0.2L5.2 0.6L4 1.8L6 3.8L4.6 5.2L2.6 3.2L1.4 4.4Z" fill="#d8202c"/></g></svg>
<svg style="left:293px;top:39px" width="1" height="1"><g transform="scale(1.05)"><ellipse cx="0" cy="0.3" rx="7.8" ry="3.8" transform="rotate(32)" fill="#eef4fc" stroke="#18285c" stroke-width="1.5"/><path d="M-3.5 -7C1 -8.5 5.5 -6 6.5 -2L7.8 -2.6L6.6 1.8L2.6 -0.6L4.2 -1.2C3.4 -3.8 0.4 -5.4 -2.6 -4.6Z" fill="#2a70e0" stroke="#1848a8" stroke-width="0.3"/><path d="M3.5 7C-1 8.5 -5.5 6 -6.5 2L-7.8 2.6L-6.6 -1.8L-2.6 0.6L-4.2 1.2C-3.4 3.8 -0.4 5.4 2.6 4.6Z" fill="#2a70e0" stroke="#1848a8" stroke-width="0.3"/><path d="M-6 -3.6L6 4.4" stroke="#18285c" stroke-width="1.3" fill="none"/></g></svg>
<svg style="left:313px;top:39px" width="1" height="1"><g transform="scale(1.05)"><path d="M-6.5 2.5C-7.5 0 -6 -1.5 -4 0.5L-3.5 -5C-3 -7 -1.3 -6.5 -1.5 -5L-1 -7C-0.5 -8.5 1.3 -8 1 -6.5L1.5 -6.5C2 -8 3.8 -7.5 3.5 -5.5L4 -5C5 -6 6.5 -5 6 -3.5L4.5 3.5C4 6.5 1 8 -2.5 7.5C-4.5 7 -5.5 5 -6.5 2.5Z" fill="#f8f8f8" stroke="#4a4a4a" stroke-width="0.65" transform="rotate(38) scale(0.95)"/><path d="M-1.5 -4.5V0M1 -6V0M3.5 -5V0.5" stroke="#666" stroke-width="0.55" transform="rotate(38) scale(0.95)"/></g></svg>
<svg style="left:332.3px;top:39px" width="1" height="1"><g transform="scale(1.05)"><path d="M0.8 0.4L6.6 6.8" stroke="#1c1c1c" stroke-width="2.1" stroke-linecap="round"/><circle cx="-2.3" cy="-3" r="4.2" fill="#90b0c8" stroke="#1c2430" stroke-width="1.3"/><path d="M-4.6 -3.8C-3.8 -5.4 -2 -5.8 -0.6 -5" fill="none" stroke="#d0e4f0" stroke-width="0.9"/></g></svg>
<svg style="left:352.3px;top:39px" width="1" height="1"><g transform="scale(1.05)"><path d="M1.5 2L6.8 7.2" stroke="#1c1c1c" stroke-width="2" stroke-linecap="round"/><path d="M-8 -8L-2.5 -5.5L-5.5 -2.5ZM8 -8L2.5 -5.5L5.5 -2.5ZM-8 8L-2.5 5.5L-5.5 2.5ZM8 8L5.5 2.5L2.5 5.5Z" fill="#6a8cb4" stroke="#46648c" stroke-width="0.4"/><path d="M-5 -5L5 5M5 -5L-5 5" stroke="#6a8cb4" stroke-width="2.2"/><circle cx="-0.3" cy="-0.8" r="4" fill="#a4c4dc" stroke="#1c2c3c" stroke-width="1.2"/></g></svg>
<svg style="left:377px;top:39px" width="1" height="1"><g transform="scale(1.05)"><path d="M-5.5 -6L7.5 -5L5.5 6L-7.5 4.5Z" fill="#f4f6fa" stroke="#2c2c2c" stroke-width="1"/><path d="M-4.6 -3.6L6.4 -2.8" stroke="#2c2c2c" stroke-width="0.9"/><path d="M-4 -1.5L1 -1.1L0.4 3.2L-4.8 2.8Z" fill="#f0e868" stroke="#8a7a10" stroke-width="0.4"/><path d="M1.4 -0.6L5.6 -0.2L4.8 5L0.6 4.6Z" fill="#e8d820" stroke="#8a7a10" stroke-width="0.5"/><path d="M-7.5 4.5L5.5 6L5.2 7.4L-7.6 5.8Z" fill="#888"/></g></svg>
<svg style="left:396px;top:39px" width="1" height="1"><g transform="scale(1.05)"><path d="M-7 -5.5L3 -7.5L7.5 2L-3 6.5Z" fill="#e4e4e4" stroke="#b4b4b4" stroke-width="0.7"/><path d="M-4 -3L3.5 -5L6 1.5L-2.5 5" fill="none" stroke="#c4c4c4" stroke-width="0.8"/><path d="M-7 -5.5L-3 6.5L-3.5 8L-8 -4Z" fill="#c8c8c8"/></g></svg>
<svg style="left:421px;top:39px" width="1" height="1"><g transform="scale(1.05)"><path d="M-8 3.5L0 0.5L8 3L1 7.5Z" fill="#48b8a0" stroke="#1c6c58" stroke-width="0.6"/><path d="M-8 3.5L-4 2L0 5L1 7.5Z" fill="#68c0e8"/><path d="M-3 -4.5L1.5 -7.5L6 -5V2L1.5 4.5L-3 2Z" fill="#7c4c2c" stroke="#2c180c" stroke-width="0.6"/><path d="M-3 -4.5L1.5 -2.5L6 -5" fill="none" stroke="#c09070" stroke-width="0.7"/><path d="M1.5 -2.5V4.5" stroke="#2c180c" stroke-width="0.6"/><path d="M-7 -1L-4 -2.5L-4 1Z" fill="#666"/></g></svg>
<svg style="left:441px;top:39px" width="1" height="1"><g transform="scale(1.05)"><path d="M-7.5 5L-1 3L5 6L-2 8.5Z" fill="#389838" stroke="#185818" stroke-width="0.5"/><rect x="-3.6" y="-4" width="4.4" height="9" rx="1.6" fill="#f09020" stroke="#a05808" stroke-width="0.6"/><circle cx="-1.4" cy="-6" r="2" fill="#f8a838" stroke="#a05808" stroke-width="0.5"/><path d="M1 2L7.5 -2.5" stroke="#c83030" stroke-width="1"/><path d="M5 -2.8L8 -3L7 0Z" fill="#c83030"/></g></svg>
<svg style="left:460.8px;top:39px" width="1" height="1"><g transform="scale(1.05)"><circle cx="0" cy="-0.6" r="6.7" fill="#2048b0" stroke="#102468" stroke-width="0.6"/><path d="M-6.5 -2C-2.5 -6 3 -6.4 6.2 -3.4C2.6 -4.2 -2.6 -3.4 -6.2 0.6Z" fill="#e8f0ff"/><path d="M-6.2 1.8C-2.6 -2.2 2.8 -2.8 6.6 0C2.6 -0.8 -2.6 0.4 -5.2 4Z" fill="#88a8e8"/><path d="M-1.5 7.4V3H-3.4L0 -1L3.4 3H1.5V7.4Z" fill="#f8a010" stroke="#a05808" stroke-width="0.4"/></g></svg>
<svg style="left:485.5px;top:39px" width="1" height="1"><g transform="scale(1.05)"><path d="M-7 -3L-2 -6.5L6.5 -4.5L7 1.5L1.5 5L-7 2.5Z" fill="#3c382c" stroke="#1a180e" stroke-width="0.6"/><path d="M-4.8 -2.8L-1.4 -5L4.6 -3.6" fill="none" stroke="#c0b890" stroke-width="1.1"/><path d="M-5.4 -0.2L0.4 1.4L6 -1.8" fill="none" stroke="#8c8460" stroke-width="0.9"/><path d="M1.6 -1.4V3H-0.4L3 7.4L6.4 3H4.4V-1.4Z" fill="#f0e020" stroke="#8a7a10" stroke-width="0.4"/></g></svg>
<svg style="left:505px;top:39px" width="1" height="1"><g transform="scale(1.05)"><path d="M-5 -3.5L0 -6.5L7.5 -4.5V1.5L2 5L-5 2Z" fill="#3c382c" stroke="#1a180e" stroke-width="0.6"/><path d="M-2.6 -3.2L0.6 -5L5.6 -3.6" fill="none" stroke="#c0b890" stroke-width="1.1"/><path d="M-0.5 1.2L2.4 2L6.6 -1" fill="none" stroke="#8c8460" stroke-width="0.9"/><path d="M-5.6 7.6V2.8H-7.6L-4.2 -1.8L-0.8 2.8H-2.8V7.6Z" fill="#f09818" stroke="#a05808" stroke-width="0.4"/></g></svg>
<svg style="left:525px;top:39px" width="1" height="1"><g transform="scale(1.05)"><path d="M-6 1L1.5 -2.5L6.5 0V4L-1 7.4L-6 5Z" fill="#ececec" stroke="#bcbcbc" stroke-width="0.7"/><path d="M-6 1L-1 3.5L6.5 0M-1 3.5V7.4" fill="none" stroke="#c4c4c4" stroke-width="0.7"/><path d="M-3 -1.5L1 -6.5L5 -3H3V0L-0.6 1.4V-1.8Z" fill="#f6f6f6" stroke="#bcbcbc" stroke-width="0.7"/></g></svg>
<svg style="left:552px;top:39px" width="1" height="1"><g transform="scale(1.05)"><defs><radialGradient id="gM" cx="0.5" cy="0.42" r="0.6"><stop offset="0" stop-color="#f8d850"/><stop offset="0.55" stop-color="#e0a818"/><stop offset="1" stop-color="#6c4c08"/></radialGradient></defs><circle cx="0" cy="0" r="7.2" fill="url(#gM)" stroke="#6c4c08" stroke-width="0.7"/><path d="M-4.6 -3.6C-2.8 -6.4 2.8 -6.4 4.6 -3.6C1.6 -4.8 -1.6 -4.8 -4.6 -3.6Z" fill="#fff" opacity="0.6"/><text x="0" y="3" font-size="8.4" font-weight="bold" fill="#2c1c04" text-anchor="middle" font-family="Liberation Sans,sans-serif">M</text></g></svg>
<svg style="left:572px;top:39px" width="1" height="1"><g transform="scale(1.05)"><path d="M-7 -3.2L-3 -7L7 0.6L7.4 4.6L2.4 7.4L-6.6 0.6Z" fill="#e0b020" stroke="#4c3404" stroke-width="1" stroke-linejoin="round"/><circle cx="1.4" cy="1.4" r="3" fill="#f0d060" stroke="#4c3404" stroke-width="1"/><circle cx="-4" cy="-3.2" r="1" fill="#fff" stroke="#4c3404" stroke-width="0.5"/></g></svg>
<svg style="left:592.6px;top:39px" width="1" height="1"><g transform="scale(1.05)"><defs><radialGradient id="gR" cx="0.5" cy="0.42" r="0.6"><stop offset="0" stop-color="#c4d8ec"/><stop offset="0.55" stop-color="#7098c8"/><stop offset="1" stop-color="#1c3c70"/></radialGradient></defs><circle cx="0" cy="0" r="7.2" fill="url(#gR)" stroke="#1c3c70" stroke-width="0.7"/><path d="M-4.6 -3.6C-2.8 -6.4 2.8 -6.4 4.6 -3.6C1.6 -4.8 -1.6 -4.8 -4.6 -3.6Z" fill="#fff" opacity="0.6"/><text x="0" y="3" font-size="8.4" font-weight="bold" fill="#0c1428" text-anchor="middle" font-family="Liberation Sans,sans-serif">R</text></g></svg>
<svg style="left:612.3px;top:39px" width="1" height="1"><g transform="scale(1.05)"><defs><radialGradient id="gQ" cx="0.5" cy="0.42" r="0.6"><stop offset="0" stop-color="#b0cce8"/><stop offset="0.55" stop-color="#5c88c0"/><stop offset="1" stop-color="#1c3c70"/></radialGradient></defs><circle cx="0" cy="0" r="7.2" fill="url(#gQ)" stroke="#1c3c70" stroke-width="0.7"/><path d="M-4.6 -3.6C-2.8 -6.4 2.8 -6.4 4.6 -3.6C1.6 -4.8 -1.6 -4.8 -4.6 -3.6Z" fill="#fff" opacity="0.6"/><text x="0" y="3" font-size="8.4" font-weight="bold" fill="#0c1428" text-anchor="middle" font-family="Liberation Sans,sans-serif">?</text></g></svg>
<svg style="left:632px;top:39px" width="1" height="1"><g transform="scale(1.05)"><path d="M-7 -3.2L-3 -7L7 0.6L7.4 4.6L2.4 7.4L-6.6 0.6Z" fill="#e0b020" stroke="#4c3404" stroke-width="1" stroke-linejoin="round"/><circle cx="1.4" cy="1.4" r="3" fill="#f0d060" stroke="#4c3404" stroke-width="1"/><circle cx="-4" cy="-3.2" r="1" fill="#fff" stroke="#4c3404" stroke-width="0.5"/></g></svg>
<div class="a" style="left:7.5px;top:51px;width:1px;height:17px;background:#c0c0c0;"></div>
<div class="a" style="left:8.5px;top:51px;width:1px;height:17px;background:#ffffff;"></div>
<div class="a" style="left:52px;top:51px;width:1px;height:17px;background:#c8c8c8;"></div>
<div class="a" style="left:53px;top:51px;width:1px;height:17px;background:#ffffff;"></div>
<div class="a" style="left:115px;top:51px;width:1px;height:17px;background:#c8c8c8;"></div>
<div class="a" style="left:116px;top:51px;width:1px;height:17px;background:#ffffff;"></div>
<div class="a" style="left:156px;top:51px;width:1px;height:17px;background:#c8c8c8;"></div>
<div class="a" style="left:157px;top:51px;width:1px;height:17px;background:#ffffff;"></div>
<div class="a" style="left:259px;top:51px;width:1px;height:17px;background:#c8c8c8;"></div>
<div class="a" style="left:260px;top:51px;width:1px;height:17px;background:#ffffff;"></div>
<div class="a" style="left:385px;top:51px;width:1px;height:17px;background:#c8c8c8;"></div>
<div class="a" style="left:386px;top:51px;width:1px;height:17px;background:#ffffff;"></div>
<div class="a" style="left:158.5px;top:51px;width:1px;height:17px;background:#c8c8c8;"></div>
<div class="a" style="left:159.5px;top:51px;width:1px;height:17px;background:#ffffff;"></div>
<div class="a" style="left:387.8px;top:51px;width:1px;height:17px;background:#c8c8c8;"></div>
<div class="a" style="left:388.8px;top:51px;width:1px;height:17px;background:#ffffff;"></div>
<svg style="left:19.6px;top:59.5px" width="1" height="1"><g transform="scale(0.95)"><polygon points="-7,-4.5 0.5,-7.5 7.5,-5 0,-1.5" fill="#8c98d0" stroke="#1c2450" stroke-width="0.7" stroke-linejoin="round"/><polygon points="-7,-4.5 0,-1.5 0,8 -6,4.5" fill="#5868b0" stroke="#1c2450" stroke-width="0.7" stroke-linejoin="round"/><polygon points="0,-1.5 7.5,-5 6.5,4.5 0,8" fill="#6c7cc0" stroke="#1c2450" stroke-width="0.7" stroke-linejoin="round"/><path d="M0.5 -7.5L0.5 1.5L-6 4.5M0.5 1.5L6.5 4.5" fill="none" stroke="#1c2450" stroke-width="0.5"/><circle cx="-7" cy="-4.5" r="0.75" fill="#333"/><circle cx="0.5" cy="-7.5" r="0.75" fill="#333"/><circle cx="7.5" cy="-5" r="0.75" fill="#333"/><circle cx="0" cy="-1.5" r="0.75" fill="#333"/><circle cx="-6" cy="4.5" r="0.75" fill="#333"/><circle cx="0" cy="8" r="0.75" fill="#333"/><circle cx="6.5" cy="4.5" r="0.75" fill="#333"/></g></svg>
<svg style="left:40.3px;top:59.5px" width="1" height="1"><g transform="scale(0.95)"><polygon points="-7,-4.5 0.5,-7.5 7.5,-5 0,-1.5" fill="none" stroke="#888" stroke-width="0.5" stroke-linejoin="round"/><polygon points="-7,-4.5 0,-1.5 0,8 -6,4.5" fill="none" stroke="#888" stroke-width="0.5" stroke-linejoin="round"/><polygon points="0,-1.5 7.5,-5 6.5,4.5 0,8" fill="none" stroke="#888" stroke-width="0.5" stroke-linejoin="round"/><path d="M0.5 -7.5L0.5 1.5L-6 4.5M0.5 1.5L6.5 4.5" fill="none" stroke="#888" stroke-width="0.5"/><circle cx="-7" cy="-4.5" r="0.75" fill="#333"/><circle cx="0.5" cy="-7.5" r="0.75" fill="#333"/><circle cx="7.5" cy="-5" r="0.75" fill="#333"/><circle cx="0" cy="-1.5" r="0.75" fill="#333"/><circle cx="-6" cy="4.5" r="0.75" fill="#333"/><circle cx="0" cy="8" r="0.75" fill="#333"/><circle cx="6.5" cy="4.5" r="0.75" fill="#333"/></g></svg>
<svg style="left:63.9px;top:59.5px" width="1" height="1"><g transform="scale(0.95)"><polygon points="-7,-4.5 0.5,-7.5 7.5,-5 0,-1.5" fill="#f8f8f8" stroke="#888" stroke-width="0.5" stroke-linejoin="round"/><polygon points="-7,-4.5 0,-1.5 0,8 -6,4.5" fill="#f4f4f4" stroke="#888" stroke-width="0.5" stroke-linejoin="round"/><polygon points="0,-1.5 7.5,-5 6.5,4.5 0,8" fill="#f4f4f4" stroke="#888" stroke-width="0.5" stroke-linejoin="round"/><path d="M0.5 -7.5L0.5 1.5L-6 4.5M0.5 1.5L6.5 4.5" fill="none" stroke="#888" stroke-width="0.5"/><circle cx="-7" cy="-4.5" r="0.75" fill="#333"/><circle cx="0.5" cy="-7.5" r="0.75" fill="#333"/><circle cx="7.5" cy="-5" r="0.75" fill="#333"/><circle cx="0" cy="-1.5" r="0.75" fill="#333"/><circle cx="-6" cy="4.5" r="0.75" fill="#333"/><circle cx="0" cy="8" r="0.75" fill="#333"/><circle cx="6.5" cy="4.5" r="0.75" fill="#333"/></g></svg>
<svg style="left:83.9px;top:59.5px" width="1" height="1"><g transform="scale(0.95)"><polygon points="-7,-4.5 0.5,-7.5 7.5,-5 0,-1.5" fill="#ffffff" stroke="#888" stroke-width="0.55" stroke-linejoin="round"/><polygon points="-7,-4.5 0,-1.5 0,8 -6,4.5" fill="#f6f6f6" stroke="#888" stroke-width="0.55" stroke-linejoin="round"/><polygon points="0,-1.5 7.5,-5 6.5,4.5 0,8" fill="#ececec" stroke="#888" stroke-width="0.55" stroke-linejoin="round"/><circle cx="-7" cy="-4.5" r="0.75" fill="#333"/><circle cx="0.5" cy="-7.5" r="0.75" fill="#333"/><circle cx="7.5" cy="-5" r="0.75" fill="#333"/><circle cx="0" cy="-1.5" r="0.75" fill="#333"/><circle cx="-6" cy="4.5" r="0.75" fill="#333"/><circle cx="0" cy="8" r="0.75" fill="#333"/><circle cx="6.5" cy="4.5" r="0.75" fill="#333"/></g></svg>
<svg style="left:104.5px;top:59.5px" width="1" height="1"><g transform="scale(0.95)"><polygon points="-7,-4.5 0.5,-7.5 7.5,-5 0,-1.5" fill="#f4ecc0" stroke="#2c2410" stroke-width="0.7" stroke-linejoin="round"/><polygon points="-7,-4.5 0,-1.5 0,8 -6,4.5" fill="#b0a070" stroke="#2c2410" stroke-width="0.7" stroke-linejoin="round"/><polygon points="0,-1.5 7.5,-5 6.5,4.5 0,8" fill="#7c6c48" stroke="#2c2410" stroke-width="0.7" stroke-linejoin="round"/></g></svg>
<svg style="left:126px;top:59.5px" width="1" height="1"><g transform="scale(0.95)"><polygon points="-7,-4.5 0.5,-7.5 7.5,-5 0,-1.5" fill="#3c3830" stroke="#000" stroke-width="0.7" stroke-linejoin="round"/><polygon points="-7,-4.5 0,-1.5 0,8 -6,4.5" fill="#1c1a16" stroke="#000" stroke-width="0.7" stroke-linejoin="round"/><polygon points="0,-1.5 7.5,-5 6.5,4.5 0,8" fill="#100e0c" stroke="#000" stroke-width="0.7" stroke-linejoin="round"/><path d="M-6.6 -1.5L0 1.6L7.2 -1.8M-6.3 1.8L0 4.8L6.8 1.5" fill="none" stroke="#a89868" stroke-width="1"/></g></svg>
<svg style="left:145px;top:59.5px" width="1" height="1"><g transform="scale(0.95)"><polygon points="-7,-4.5 0.5,-7.5 7.5,-5 0,-1.5" fill="#f0f4ff" stroke="#2c3470" stroke-width="0.7" stroke-linejoin="round"/><polygon points="-7,-4.5 0,-1.5 0,8 -6,4.5" fill="#5c6cd0" stroke="#2c3470" stroke-width="0.7" stroke-linejoin="round"/><polygon points="0,-1.5 7.5,-5 6.5,4.5 0,8" fill="#7888e0" stroke="#2c3470" stroke-width="0.7" stroke-linejoin="round"/><path d="M-7 -4.5L0.5 -7.5L7.5 -5L0 -1.5Z" fill="none" stroke="#3858c8" stroke-width="1.3"/><circle cx="-6" cy="5" r="1" fill="#222"/><circle cx="0" cy="8" r="1" fill="#222"/><circle cx="6.5" cy="5" r="1" fill="#222"/></g></svg>
<svg style="left:246.4px;top:59.5px" width="1" height="1"><g transform="scale(0.92)"><path d="M-8 -3L-1 -7.5L7 -4.5L0.5 0Z" fill="#fff" stroke="#777" stroke-width="0.7"/><path d="M-8 -3V1L0.5 4V0ZM0.5 0L7 -4.5V-1L0.5 4Z" fill="#ececec" stroke="#777" stroke-width="0.7"/><path d="M-8 1V3.5L0.5 6.5V4Z" fill="#d4d4d4" stroke="#777" stroke-width="0.6"/><circle cx="3.5" cy="3.8" r="4.1" fill="#2838d0" stroke="#1420a0" stroke-width="0.5"/><circle cx="3.5" cy="3.8" r="2" fill="#7888f0"/><text x="3.5" y="5.6" font-size="5" font-weight="bold" fill="#fff" text-anchor="middle" font-family="Liberation Sans,sans-serif">4</text></g></svg>
<svg style="left:273.7px;top:59.1px" width="1" height="1"><g transform="scale(0.86)"><path d="M-8 -1L-2 -7.5L5 -6L8 -0.5L2 0.5Z" fill="#b89c78" stroke="#3c3020" stroke-width="0.7"/><path d="M-8 -1L-3.5 -6L2 0.5V8L-6.5 6.5V-1Z" fill="#fff" stroke="#222" stroke-width="0.8"/><path d="M2 0.5L8 -0.5V6L2 8Z" fill="#e0e0e0" stroke="#222" stroke-width="0.8"/><path d="M-4 1.5H-0.8V7.5L-4 7Z" fill="#111"/></g></svg>
<svg style="left:293.8px;top:59.1px" width="1" height="1"><g transform="scale(0.84)"><path d="M-6 -6.5L0.5 -8L6.5 -6.5V6L0.5 8L-6 6Z" fill="#c0a078" stroke="#4e3c24" stroke-width="0.7"/><path d="M0.5 -5.5V8" stroke="#4e3c24" stroke-width="0.7"/><path d="M-6 -6.5L0.5 -5.5L6.5 -6.5" fill="none" stroke="#4e3c24" stroke-width="0.7"/><path d="M0.5 -5.5L6.5 -6.5V6L0.5 8Z" fill="#a88860"/><rect x="3" y="-2" width="1.6" height="5" fill="#6a5030"/></g></svg>
<svg style="left:314px;top:59.5px" width="1" height="1"><g transform="scale(0.92)"><path d="M-8 -0.5L0 -8L8 -0.5" fill="none" stroke="#111" stroke-width="1.2"/><path d="M-6 -1.5L0 -7L6 -1.5V7.5H-6Z" fill="#fff" stroke="#111" stroke-width="1"/><rect x="-2.6" y="0.5" width="4.4" height="7" fill="#111"/></g></svg>
<svg style="left:334.2px;top:59.5px" width="1" height="1"><g transform="scale(0.98)"><rect x="-7" y="-6.5" width="14" height="6.5" fill="#b8946c" stroke="#5e4828" stroke-width="0.5"/><rect x="-7" y="0" width="14" height="7.5" fill="#fff" stroke="#555" stroke-width="0.8"/><rect x="1" y="-7.5" width="4" height="4" fill="#fff" stroke="#555" stroke-width="0.6"/></g></svg>
<svg style="left:354px;top:59.5px" width="1" height="1"><g transform="scale(0.92)"><path d="M-8 -0.5L0 -8L8 -0.5" fill="none" stroke="#222" stroke-width="1"/><path d="M-6 -1.5L0 -7L6 -1.5V7.5H-6Z" fill="#fff" stroke="#222" stroke-width="0.9"/></g></svg>
<svg style="left:374.2px;top:59.5px" width="1" height="1"><g transform="scale(0.98)"><rect x="-7" y="-6.5" width="14" height="6.5" fill="#b8946c" stroke="#5e4828" stroke-width="0.5"/><rect x="-7" y="0" width="14" height="7.5" fill="#fff" stroke="#555" stroke-width="0.8"/></g></svg>
<svg style="left:401px;top:59.5px" width="1" height="1"><g transform="scale(1.0)"><path d="M-7 -5.5L-1.5 -8L5 -6V1.5L-0.5 4.5L-7 2Z" fill="#1c1c1c"/><path d="M-5 -5.3L-1.4 -6.9L3 -5.6L-0.6 -3.8Z" fill="#fff"/><path d="M0.2 -2.8L4.5 -4.9V1.2L0.2 3.4Z" fill="#4c4c4c"/><circle cx="3.4" cy="2.2" r="3.9" fill="#2030c8" stroke="#101880" stroke-width="0.5"/><circle cx="3.4" cy="2.2" r="2.4" fill="#4858e8"/><rect x="2.85" y="1.6" width="1.1" height="2.6" fill="#fff"/><rect x="2.85" y="0" width="1.1" height="1" fill="#fff"/></g></svg>
<svg style="left:421px;top:59.5px" width="1" height="1"><g transform="scale(1.0)"><path d="M-1 3L6.5 0.5L8.5 3.5L1 6Z" fill="#222"/><path d="M-7 -5.5L-1.5 -8L5 -6V1.5L-0.5 4.5L-7 2Z" fill="#1c1c1c"/><path d="M-5 -5.3L-1.4 -6.9L3 -5.6L-0.6 -3.8Z" fill="#fff"/><path d="M0.2 -2.8L4.5 -4.9V1.2L0.2 3.4Z" fill="#444"/></g></svg>
<div class="a" style="left:162.5px;top:51.5px;width:69.5px;height:15.5px;background:#ffffe1;border:1px solid #808080;box-sizing:border-box;"></div>
<svg style="left:168.3px;top:59.5px" width="1" height="1"><g transform="scale(0.62)"><path d="M-2.6 -5V3.8L-0.6 2L0.9 5.2L2.3 4.6L0.9 1.5H3.6Z" fill="#1a1a1a" stroke="#aaa" stroke-width="0.4"/></g></svg>
<div class="t" style="left:177px;top:55px;font-size:9px;color:#111;font-family:'Liberation Serif',serif;">Layer0</div>
<div class="a" style="left:221.5px;top:52.5px;width:9.5px;height:13.5px;background:#f0f0f0;border:1px solid #707070;box-sizing:border-box;"></div>
<svg style="left:221.5px;top:52.5px" width="9.5" height="13.5"><path d="M2.4 5.6h4.8l-2.4 3z" fill="#111"/></svg>
<svg style="left:0;top:0" width="634" height="72" viewBox="0 0 634 72"><defs><linearGradient id="mg" x1="0" x2="1"><stop offset="0" stop-color="#f8f0a0"/><stop offset="0.35" stop-color="#f0a040"/><stop offset="0.75" stop-color="#e03030"/><stop offset="1" stop-color="#e04848"/></linearGradient></defs><rect x="436" y="54" width="77" height="1.4" fill="url(#mg)"/><rect x="513" y="54" width="13" height="1.2" fill="#e890a0"/><path d="M436.5 53.5V58M513 52.5V58.5" stroke="#999" stroke-width="0.8" fill="none"/><rect x="533.4" y="54.6" width="60.6" height="1.5" fill="#8890c8"/><rect x="594" y="54.6" width="28.6" height="1.6" fill="#1c2040"/><path d="M533.8 54V58.5M594 53V59.5" stroke="#999" stroke-width="0.8" fill="none"/><text x="439" y="64.2" font-size="5.8" font-weight="bold" fill="#222" text-anchor="middle" font-family="Liberation Sans,sans-serif">J</text><text x="447.2" y="64.2" font-size="5.8" font-weight="bold" fill="#222" text-anchor="middle" font-family="Liberation Sans,sans-serif">F</text><text x="455.2" y="64.2" font-size="5.8" font-weight="bold" fill="#222" text-anchor="middle" font-family="Liberation Sans,sans-serif">M</text><text x="463.4" y="64.2" font-size="5.8" font-weight="bold" fill="#222" text-anchor="middle" font-family="Liberation Sans,sans-serif">A</text><text x="471.7" y="64.2" font-size="5.8" font-weight="bold" fill="#222" text-anchor="middle" font-family="Liberation Sans,sans-serif">M</text><text x="478.5" y="64.2" font-size="5.8" font-weight="bold" fill="#222" text-anchor="middle" font-family="Liberation Sans,sans-serif">J</text><text x="485.5" y="64.2" font-size="5.8" font-weight="bold" fill="#222" text-anchor="middle" font-family="Liberation Sans,sans-serif">J</text><text x="493" y="64.2" font-size="5.8" font-weight="bold" fill="#222" text-anchor="middle" font-family="Liberation Sans,sans-serif">A</text><text x="500.8" y="64.2" font-size="5.8" font-weight="bold" fill="#222" text-anchor="middle" font-family="Liberation Sans,sans-serif">S</text><text x="509" y="64.2" font-size="5.8" font-weight="bold" fill="#222" text-anchor="middle" font-family="Liberation Sans,sans-serif">O</text><text x="518" y="64.2" font-size="5.8" font-weight="bold" fill="#222" text-anchor="middle" font-family="Liberation Sans,sans-serif">N</text><text x="525.3" y="64.2" font-size="5.8" font-weight="bold" fill="#222" text-anchor="middle" font-family="Liberation Sans,sans-serif">D</text><text x="533.4" y="64.4" font-size="6" fill="#222" font-family="Liberation Sans,sans-serif">06:43</text><text x="574" y="64.4" font-size="5.6" fill="#222" font-family="Liberation Sans,Noto Sans CJK SC,sans-serif">中午</text><text x="609.5" y="64.4" font-size="6" fill="#222" font-family="Liberation Sans,sans-serif">16:46</text></svg>
<div class="a" style="left:628px;top:51px;width:1px;height:17px;background:#c8c8c8;"></div>
<div class="a" style="left:629px;top:51px;width:1px;height:17px;background:#ffffff;"></div>
<svg style="left:2px;top:2.5px" width="9" height="9" viewBox="0 0 9 9"><path d="M0.5 5.5L4 1.5L8.5 0.5L7 3.5L4.5 4L6 5L3 8.5L1 8Z" fill="#b84830"/><path d="M0.5 5.5L2.5 4.5L4.5 6L3 8.5L1 8Z" fill="#7c2c1c"/><path d="M4 1.5L8.5 0.5L7.6 2.2L4.6 2.8Z" fill="#e88868"/></svg>
<svg style="left:64px;top:522.5px" width="12" height="12" viewBox="0 0 12 12"><circle cx="5.6" cy="5.8" r="4.8" fill="#fff" stroke="#111" stroke-width="1.1"/><text x="5.6" y="8.9" font-size="8.4" font-weight="bold" text-anchor="middle" fill="#111" font-family="Liberation Sans,sans-serif">?</text></svg>
<div class="a" style="left:0px;top:515.7px;width:64.5px;height:19.6px;background:#ffffff;border:1px solid #b4cfe4;border-left:none;box-sizing:border-box;"></div>
<div class="t" style="left:5.3px;top:519.6px;font-size:11.2px;color:#2a78d0;">英</div>
<svg style="left:20px;top:518px" width="42" height="16" viewBox="0 0 42 16"><path d="M6.4 2.2A5.2 5.2 0 1 1 1.6 10.6A5 5 0 0 0 6.4 2.2Z" fill="#2a78d0"/><circle cx="18.4" cy="6" r="0.9" fill="#2a78d0"/><path d="M20.4 8.2c0.9 0.6 0.8 1.8 -0.2 2.6" fill="none" stroke="#2a78d0" stroke-width="1"/><g transform="translate(33.8,7.6)"><circle r="3.3" fill="none" stroke="#2a78d0" stroke-width="1.5"/><rect x="-0.9" y="-5.4" width="1.8" height="2" fill="#2a78d0" transform="rotate(0)"/><rect x="-0.9" y="-5.4" width="1.8" height="2" fill="#2a78d0" transform="rotate(45)"/><rect x="-0.9" y="-5.4" width="1.8" height="2" fill="#2a78d0" transform="rotate(90)"/><rect x="-0.9" y="-5.4" width="1.8" height="2" fill="#2a78d0" transform="rotate(135)"/><rect x="-0.9" y="-5.4" width="1.8" height="2" fill="#2a78d0" transform="rotate(180)"/><rect x="-0.9" y="-5.4" width="1.8" height="2" fill="#2a78d0" transform="rotate(225)"/><rect x="-0.9" y="-5.4" width="1.8" height="2" fill="#2a78d0" transform="rotate(270)"/><rect x="-0.9" y="-5.4" width="1.8" height="2" fill="#2a78d0" transform="rotate(315)"/></g></svg>
</div></body></html>
